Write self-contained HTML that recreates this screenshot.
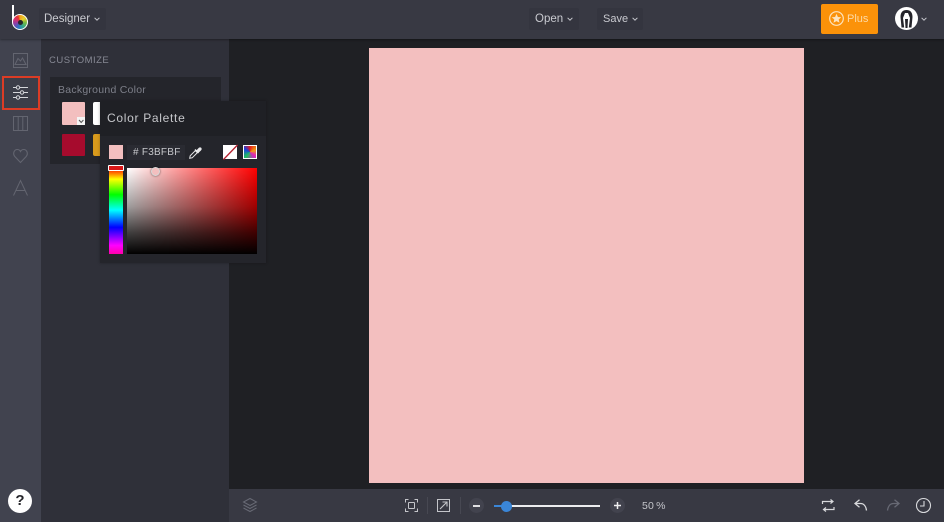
<!DOCTYPE html>
<html><head><meta charset="utf-8"><style>
html,body{margin:0;padding:0;width:944px;height:522px;overflow:hidden;background:#1f2024;font-family:"Liberation Sans",sans-serif}
.a{position:absolute;box-sizing:content-box}
.t{position:absolute;white-space:nowrap}
svg{position:absolute;overflow:visible}
</style></head><body>
<div class="a" style="left:0;top:0;width:944px;height:522px;overflow:hidden">
<!-- canvas -->
<div class="a" style="left:369px;top:48px;width:435px;height:435px;background:#f3bfbf"></div>
<!-- bottom bar -->
<div class="a" style="left:229px;top:489px;width:715px;height:33px;background:#383943"></div>
<!-- rail + panel -->
<div class="a" style="left:0;top:39px;width:41px;height:483px;background:#41434f"></div>
<div class="a" style="left:41px;top:39px;width:188px;height:483px;background:#2f3039"></div>
<!-- top bar -->
<div class="a" style="left:0;top:0;width:944px;height:39px;background:#383943;box-shadow:0 1px 2px rgba(0,0,0,.35)"></div>
<!-- logo -->
<div class="a" style="left:12px;top:5px;width:1.500px;height:17px;background:#fff"></div>
<div class="a" style="left:12px;top:14px;width:14px;height:14px;border:1.300px solid #fff;border-radius:50%;background:conic-gradient(#f2a31f 0deg,#e8d02a 50deg,#6fb845 100deg,#2fa58f 150deg,#2f6fc4 200deg,#8a3fa8 250deg,#d92f6b 300deg,#e8382a 340deg,#f2a31f 360deg)"></div>
<div class="a" style="left:17.500px;top:19.500px;width:5px;height:5px;border-radius:50%;background:#26262c"></div>
<!-- top buttons -->
<div class="a" style="left:39px;top:8px;width:67px;height:22px;background:#34353f;border-radius:2px"></div>
<div class="t" style="left:44px;top:12px;font-size:11.500px;line-height:14px;color:#c9cad0">Designer</div>
<svg style="left:94px;top:17px" width="6" height="5"><path d="M.6.8 3 3.200 5.400.8" fill="none" stroke="#c9cad0" stroke-width="1"/></svg>
<div class="a" style="left:529px;top:8px;width:50px;height:22px;background:#34353f;border-radius:2px"></div>
<div class="t" style="left:535px;top:12px;font-size:11.500px;line-height:14px;color:#c9cad0">Open</div>
<svg style="left:567px;top:17px" width="6" height="5"><path d="M.6.8 3 3.200 5.400.8" fill="none" stroke="#c9cad0" stroke-width="1"/></svg>
<div class="a" style="left:597px;top:8px;width:46px;height:22px;background:#34353f;border-radius:2px"></div>
<div class="t" style="left:603px;top:12px;font-size:11px;line-height:14px;color:#c9cad0">Save</div>
<svg style="left:632px;top:17px" width="6" height="5"><path d="M.6.8 3 3.200 5.400.8" fill="none" stroke="#c9cad0" stroke-width="1"/></svg>
<!-- plus -->
<div class="a" style="left:821px;top:4px;width:57px;height:30px;background:#fb9209;border-radius:2px"></div>
<svg style="left:829px;top:11px" width="16" height="16"><circle cx="7.500" cy="7.500" r="6.800" fill="none" stroke="#fde3bd" stroke-width="1.200"/><path d="M7.500 2.800 8.900 6 12.300 6.300 9.700 8.500 10.500 11.800 7.500 10.100 4.500 11.800 5.300 8.500 2.700 6.300 6.100 6Z" fill="#fde3bd"/></svg>
<div class="t" style="left:847px;top:12px;font-size:11px;line-height:14px;color:#fdd9a6">Plus</div>
<!-- avatar -->
<svg style="left:895px;top:7px" width="24" height="24"><circle cx="11.500" cy="11.500" r="11.500" fill="#fff"/><path d="M6.500 20.500 5.500 10C5.500 5 8 3 11.500 3 15 3 17.500 5 17.500 10L16.500 20.500H13.800L15 11 13 6H10L8 11 9.200 20.500Z" fill="#24242a"/><path d="M10 12H13L12.500 21H10.500Z" fill="#24242a"/></svg>
<svg style="left:921px;top:17px" width="6" height="5"><path d="M.6.8 3 3.200 5.400.8" fill="none" stroke="#c9cad0" stroke-width="1"/></svg>
<!-- rail icons -->
<svg style="left:13px;top:53px" width="16" height="16" fill="none" stroke="#636570" stroke-width="1"><rect x=".5" y=".5" width="14" height="14"/><path d="M2 11.500 5 5.500 7.500 8 9.500 5 13 11.500Z"/></svg>
<div class="a" style="left:2px;top:76px;width:34px;height:30px;border:2px solid #dc3c25;background:#3c3e49"></div>
<svg style="left:13px;top:86px" width="16" height="14" fill="none" stroke="#d5d6da" stroke-width="1"><path d="M0 1.500H15M0 6.500H15M0 11.500H15"/><circle cx="5" cy="1.500" r="1.700" fill="#3c3e49"/><circle cx="9" cy="6.500" r="1.700" fill="#3c3e49"/><circle cx="5" cy="11.500" r="1.700" fill="#3c3e49"/></svg>
<svg style="left:13px;top:116px" width="16" height="16" fill="none" stroke="#636570" stroke-width="1"><rect x=".5" y=".5" width="14" height="14"/><path d="M5.200.5V14.500M9.800.5V14.500"/></svg>
<svg style="left:13px;top:148px" width="16" height="16" fill="none" stroke="#636570" stroke-width="1.100"><path d="M7.500 14.500 1.800 8.500C-.5 5.800 1 1.500 4.300 1.500 5.800 1.500 6.900 2.300 7.500 3.500 8.100 2.300 9.200 1.500 10.700 1.500 14 1.500 15.500 5.800 13.200 8.500Z"/></svg>
<svg style="left:13px;top:180px" width="16" height="16" fill="none" stroke="#636570" stroke-width="1"><path d="M.5 15.500 7.500.5 14.500 15.500M3 10.500H12"/></svg>
<!-- help -->
<div class="a" style="left:8px;top:489px;width:24px;height:24px;border-radius:50%;background:#fff"></div>
<div class="t" style="left:8px;top:493px;width:24px;text-align:center;font-size:15px;line-height:16px;font-weight:bold;color:#26262b">?</div>
<!-- panel -->
<div class="t" style="left:49px;top:55px;font-size:9.500px;line-height:11px;letter-spacing:.5px;color:#878994">CUSTOMIZE</div>
<div class="a" style="left:50px;top:77px;width:171px;height:87px;background:#24252b"></div>
<div class="t" style="left:58px;top:84px;font-size:10.500px;line-height:13px;letter-spacing:.25px;color:#7d7f89">Background Color</div>
<div class="a" style="left:62px;top:102px;width:23px;height:23px;background:#f3bfbf;border-radius:1px"></div>
<div class="a" style="left:77px;top:117px;width:8px;height:8px;background:#f4f4f4"></div>
<svg style="left:78px;top:119px" width="7" height="5"><path d="M1 1 3.200 3.500 5.400 1" fill="none" stroke="#555" stroke-width="1"/></svg>
<div class="a" style="left:93px;top:102px;width:10px;height:23px;background:#fff;border-radius:2px"></div>
<div class="a" style="left:62px;top:134px;width:23px;height:22px;background:#a60b2d;border-radius:1px"></div>
<div class="a" style="left:93px;top:134px;width:10px;height:22px;background:#d99a1c;border-radius:2px"></div>
<!-- popover -->
<div class="a" style="left:100px;top:101px;width:166px;height:162px;background:#24252b;box-shadow:0 0 3px rgba(0,0,0,.3)"></div>
<div class="a" style="left:100px;top:101px;width:166px;height:35px;background:#1f2025"></div>
<div class="t" style="left:107px;top:111px;font-size:12px;line-height:15px;letter-spacing:.7px;color:#c6c7cb">Color Palette</div>
<div class="a" style="left:109px;top:145px;width:14px;height:14px;background:#f3bfbf"></div>
<div class="a" style="left:127px;top:145px;width:58px;height:15px;background:#2a2b32"></div>
<div class="t" style="left:133px;top:146px;font-size:10px;line-height:13px;letter-spacing:.25px;color:#c6c7cb">#&nbsp;F3BFBF</div>
<svg style="left:189px;top:147px" width="13" height="12" fill="none" stroke="#e8e8ea" stroke-width="1"><path d="M.7 11.300 1.200 8.800 6.300 3.700 8.300 5.700 3.200 10.800Z"/><path d="M6 2.500 9.500 6" stroke-width="1.400"/><path d="M8 3.500 10 1.300C10.800.6 11.800.8 12.100 1.500 12.400 2.200 12 2.800 11.500 3.300L9.300 5.300Z" fill="#e8e8ea"/></svg>
<div class="a" style="left:223px;top:145px;width:14px;height:14px;background:#fff"></div>
<svg style="left:223px;top:145px" width="14" height="14"><path d="M.5 14.500 14.500 0" stroke="#b5202f" stroke-width="1.300"/></svg>
<div class="a" style="left:243px;top:145px;width:14px;height:14px;background:#fff"></div>
<div class="a" style="left:244px;top:146px;width:12px;height:12px;background:conic-gradient(#e81a1a 0deg,#f0a010 70deg,#e020c0 130deg,#20c060 220deg,#1a40e0 300deg,#e81a1a 360deg)"></div>
<!-- hue -->
<div class="a" style="left:109px;top:168px;width:14px;height:86px;background:linear-gradient(to bottom,#f00 0%,#ff0 13%,#0f0 31%,#0ff 49%,#00f 69%,#f0f 90%,#f0a 100%)"></div>
<div class="a" style="left:108px;top:165px;width:14px;height:4px;background:#d81818;border:1px solid #fff;border-radius:1px"></div>
<!-- sv -->
<div class="a" style="left:127px;top:168px;width:130px;height:86px;background:linear-gradient(to top,#000 0%,rgba(0,0,0,.75) 25%,rgba(0,0,0,.38) 55%,rgba(0,0,0,0) 100%),linear-gradient(to right,#fff,#f00)"></div>
<div class="a" style="left:151px;top:167px;width:7px;height:7px;border-radius:50%;background:#f3bfbf;border:1.500px solid #d8d8d8;box-shadow:0 0 2px rgba(0,0,0,.6)"></div>
<!-- bottom icons -->
<svg style="left:243px;top:498px" width="14" height="14" fill="none" stroke="#686a75" stroke-width="1"><path d="M7 .5 13.500 4 7 7.500 .5 4Z"/><path d="M.5 7 7 10.500 13.500 7M.5 10 7 13.500 13.500 10"/></svg>
<svg style="left:405px;top:499px" width="14" height="14" fill="none" stroke="#c4c5ca" stroke-width="1"><path d="M.5 3.500V.5H3.500M9.500.5H12.500V3.500M12.500 9.500V12.500H9.500M3.500 12.500H.5V9.500"/><rect x="3.500" y="3.500" width="6" height="6" rx=".5"/></svg>
<div class="a" style="left:427px;top:497px;width:1px;height:17px;background:#474852"></div>
<svg style="left:437px;top:499px" width="14" height="14" fill="none" stroke="#c4c5ca" stroke-width="1"><rect x=".5" y=".5" width="12" height="12"/><path d="M3 10 10 3M5.500 3H10V7.500" stroke-width="1.100"/></svg>
<div class="a" style="left:460px;top:497px;width:1px;height:17px;background:#474852"></div>
<div class="a" style="left:469px;top:498px;width:15px;height:15px;border-radius:50%;background:#42434e"></div>
<div class="a" style="left:473px;top:505px;width:7px;height:1.500px;background:#e0e0e3"></div>
<div class="a" style="left:494px;top:505px;width:106px;height:2px;background:#ecedef"></div>
<div class="a" style="left:494px;top:505px;width:12px;height:2px;background:#3a86d8"></div>
<div class="a" style="left:501px;top:501px;width:11px;height:11px;border-radius:50%;background:#3a86d8"></div>
<div class="a" style="left:610px;top:498px;width:15px;height:15px;border-radius:50%;background:#42434e"></div>
<svg style="left:613px;top:501px" width="9" height="9"><path d="M4.500 1V8M1 4.500H8" stroke="#f0f0f2" stroke-width="1.500"/></svg>
<div class="t" style="left:642px;top:500px;font-size:10.500px;line-height:13px;letter-spacing:.1px;color:#c4c5ca">50&thinsp;%</div>
<svg style="left:822px;top:499px" width="13" height="14" fill="none" stroke="#d8d9dc" stroke-width="1.200"><path d="M.5 5V2.500H10.500M8.500 .5 11 2.500 8.500 4.500M12 8V10.500H2M4 8.500 1.500 10.500 4 12.500"/></svg>
<svg style="left:854px;top:499px" width="14" height="14" fill="none" stroke="#d8d9dc" stroke-width="1.300"><path d="M5.500 .8 1 4.500 5.500 8.200M1 4.500H6.500C10 4.500 12 7.500 12.500 11.500"/></svg>
<svg style="left:886px;top:499px" width="14" height="14" fill="none" stroke="#686a75" stroke-width="1.300"><path d="M8.500 .8 13 4.500 8.500 8.200M13 4.500H7.500C4 4.500 2 7.500 1.500 11.500"/></svg>
<svg style="left:916px;top:498px" width="16" height="16" fill="none" stroke="#d8d9dc" stroke-width="1.100"><circle cx="7.500" cy="7.500" r="7"/><path d="M8 3V8H4"/></svg>
</div>
</body></html>
